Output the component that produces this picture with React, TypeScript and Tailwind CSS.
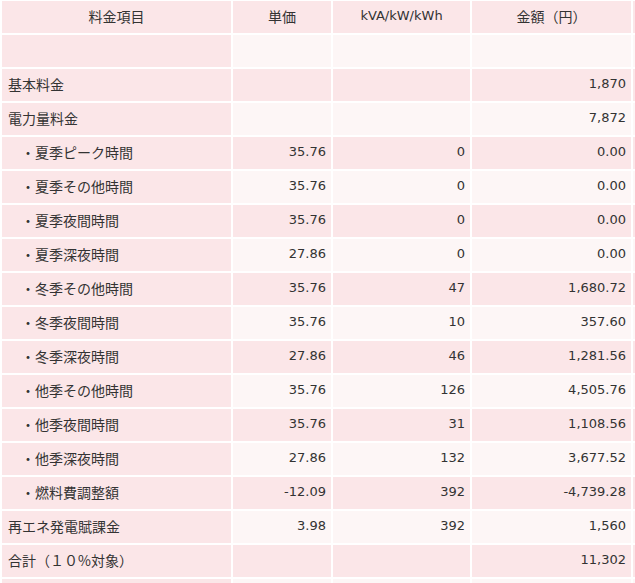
import React from "react";

type Row = { label: string; sub?: boolean; price?: string; qty?: string; amount?: string };

const rows: Row[] = [
  { label: "" },
  { label: "基本料金", amount: "1,870" },
  { label: "電力量料金", amount: "7,872" },
  { label: "・夏季ピーク時間", sub: true, price: "35.76", qty: "0", amount: "0.00" },
  { label: "・夏季その他時間", sub: true, price: "35.76", qty: "0", amount: "0.00" },
  { label: "・夏季夜間時間", sub: true, price: "35.76", qty: "0", amount: "0.00" },
  { label: "・夏季深夜時間", sub: true, price: "27.86", qty: "0", amount: "0.00" },
  { label: "・冬季その他時間", sub: true, price: "35.76", qty: "47", amount: "1,680.72" },
  { label: "・冬季夜間時間", sub: true, price: "35.76", qty: "10", amount: "357.60" },
  { label: "・冬季深夜時間", sub: true, price: "27.86", qty: "46", amount: "1,281.56" },
  { label: "・他季その他時間", sub: true, price: "35.76", qty: "126", amount: "4,505.76" },
  { label: "・他季夜間時間", sub: true, price: "35.76", qty: "31", amount: "1,108.56" },
  { label: "・他季深夜時間", sub: true, price: "27.86", qty: "132", amount: "3,677.52" },
  { label: "・燃料費調整額", sub: true, price: "-12.09", qty: "392", amount: "-4,739.28" },
  { label: "再エネ発電賦課金", price: "3.98", qty: "392", amount: "1,560" },
  { label: "合計（１０%対象）", amount: "11,302" },
  { label: "" },
];

const jp = "font-['Noto_Sans_CJK_JP',sans-serif] text-[14px]";
const num = "font-['DejaVu_Sans','Noto_Sans_CJK_JP',sans-serif] text-[13px]";

export default function App() {
  return (
    <div className="w-full overflow-hidden bg-white text-[#333]">
      <table className="-mt-px w-[735px] table-fixed border-separate border-spacing-[2px]">
        <colgroup>
          <col className="w-[229px]" />
          <col className="w-[98px]" />
          <col className="w-[137px]" />
          <col className="w-[159px]" />
          <col className="w-[100px]" />
        </colgroup>
        <thead>
          <tr>
            <th className={`h-[32px] bg-[#fbe6e8] px-0 pt-0 pb-[2px] text-center align-middle font-normal ${jp}`}>料金項目</th>
            <th className={`h-[32px] bg-[#fbe6e8] px-0 pt-0 pb-[2px] text-center align-middle font-normal ${jp}`}>単価</th>
            <th className={`h-[32px] bg-[#fbe6e8] px-0 pt-0 pb-[2px] text-center align-middle font-normal ${num}`}>kVA/kW/kWh</th>
            <th className={`h-[32px] bg-[#fbe6e8] px-0 pt-0 pb-[2px] text-center align-middle font-normal ${jp}`}>金額（円）</th>
            <th className="h-[32px] bg-[#fbe6e8] p-0"></th>
          </tr>
        </thead>
        <tbody>
          {rows.map((r, i) => {
            const bg = i % 2 === 0 ? "bg-[#fdf6f6]" : "bg-[#fbe6e8]";
            return (
              <tr key={i}>
                <td
                  className={`h-[32px] whitespace-nowrap bg-[#fbe6e8] pt-0 pb-[2px] pr-0 align-middle ${jp} ${
                    r.sub ? "pl-[19px]" : "pl-[6px]"
                  }`}
                >
                  {r.label}
                </td>
                <td className={`h-[32px] pt-0 pb-[2px] pl-0 pr-[5px] text-right align-middle ${bg} ${num}`}>{r.price ?? ""}</td>
                <td className={`h-[32px] pt-0 pb-[2px] pl-0 pr-[5px] text-right align-middle ${bg} ${num}`}>{r.qty ?? ""}</td>
                <td className={`h-[32px] pt-0 pb-[2px] pl-0 pr-[5px] text-right align-middle ${bg} ${num}`}>{r.amount ?? ""}</td>
                <td className={`h-[32px] p-0 ${bg}`}></td>
              </tr>
            );
          })}
        </tbody>
      </table>
    </div>
  );
}
